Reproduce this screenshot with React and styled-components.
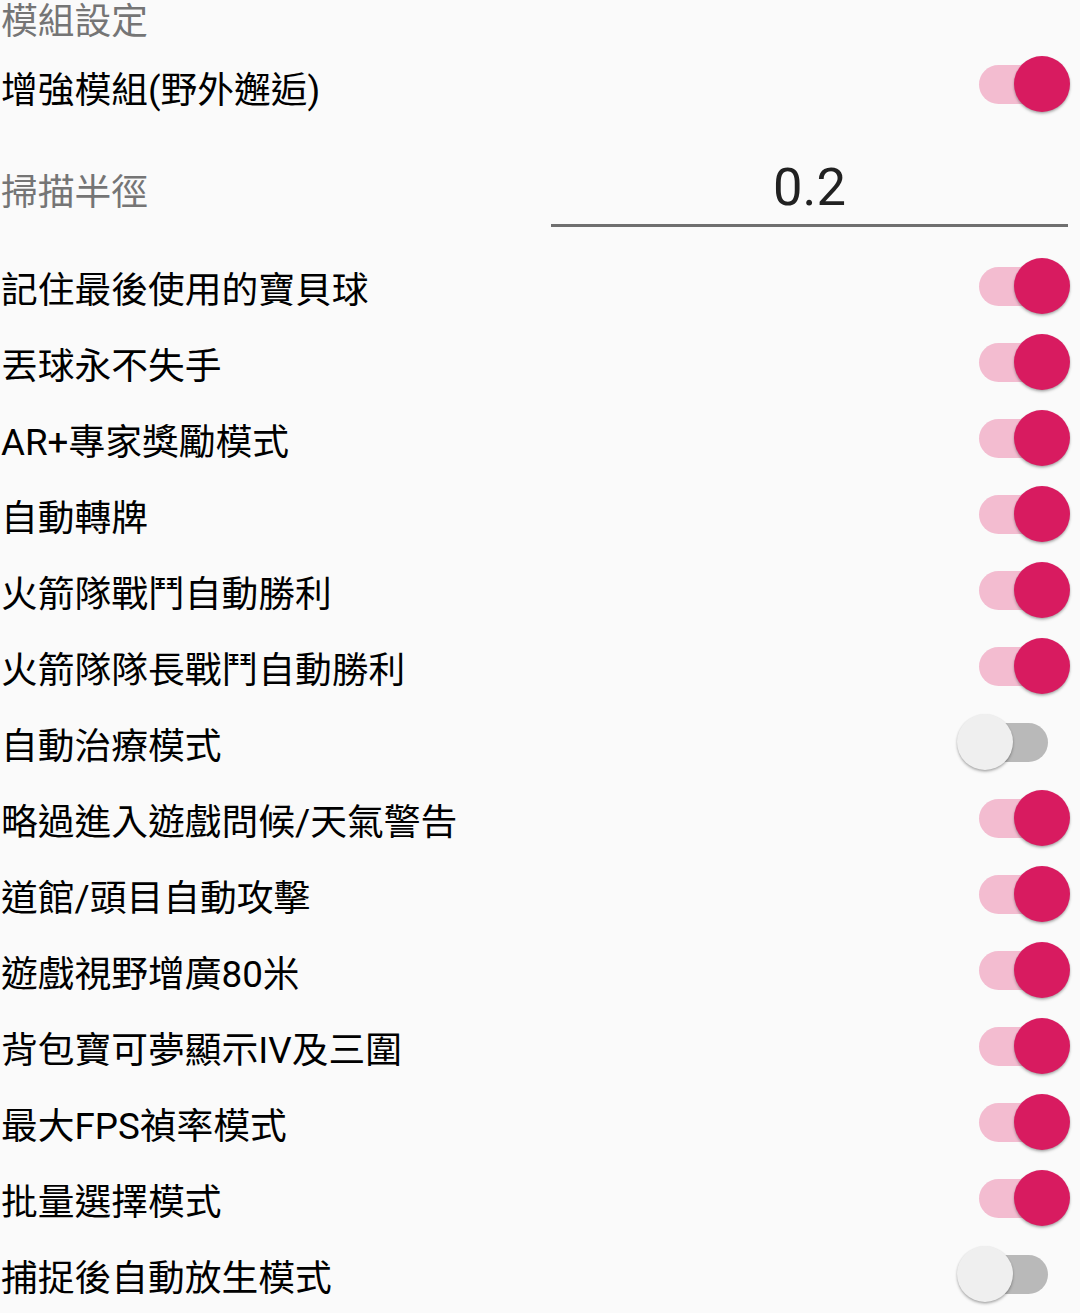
import React, { useState } from "react";
import styled, { createGlobalStyle } from "styled-components";

const Global = createGlobalStyle`
  html, body { margin: 0; padding: 0; background: #fafafa; }
  body { font-family: Roboto, "Noto Sans CJK TC", "Noto Sans CJK SC", sans-serif; }
`;

const Page = styled.div`
  width: 1080px;
  height: 1313px;
  overflow: hidden;
  background: #fafafa;
  display: flex;
  flex-direction: column;
`;

const Heading = styled.div`
  height: 46px;
  line-height: 44px;
  font-size: 36.75px;
  color: #757575;
  padding-left: 1px;
`;

const Row = styled.div`
  height: 76px;
  display: flex;
  align-items: center;
  justify-content: space-between;
  padding-right: 10px;
`;

const Label = styled.div`
  font-size: 36.75px;
  line-height: 44px;
  color: ${(p) => (p.$muted ? "#757575" : "#000")};
  padding-left: 1px;
  padding-top: ${(p) => (p.$nudge ? p.$nudge : 10)}px;
  white-space: nowrap;
`;

const ScanRow = styled.div`
  height: 126px;
  display: flex;
  align-items: flex-start;
  justify-content: space-between;
  padding-right: 12px;
`;

const ScanLabel = styled(Label)`
  margin-top: 49px;
  padding-top: 0;
`;

const Input = styled.div`
  width: 517px;
  margin-top: 33px;
  height: 64px;
  line-height: 64px;
  padding-bottom: 5px;
  border-bottom: 3px solid #6f6f6f;
  font-size: 52.5px;
  color: #212121;
  text-align: center;
  font-family: Roboto, sans-serif;
`;

const Switch = styled.button`
  position: relative;
  width: 113px;
  height: 57px;
  border: 0;
  padding: 0;
  background: transparent;
  cursor: pointer;
  flex: none;
`;

const Track = styled.span`
  position: absolute;
  left: 22px;
  top: 9px;
  width: 69px;
  height: 39px;
  border-radius: 20px;
  background: ${(p) => (p.$on ? "#f3bcd0" : "#b9b9b9")};
`;

const Thumb = styled.span`
  position: absolute;
  top: 0;
  left: ${(p) => (p.$on ? "57px" : "0px")};
  width: 56px;
  height: 56px;
  border-radius: 50%;
  background: ${(p) => (p.$on ? "#d81b60" : "#efefef")};
  box-shadow: 0 2px 3px rgba(0, 0, 0, 0.22), 0 1px 2px rgba(0, 0, 0, 0.14);
`;

const Toggle = ({ on, onClick }) => (
  <Switch onClick={onClick} aria-pressed={on}>
    <Track $on={on} />
    <Thumb $on={on} />
  </Switch>
);

const items = [
  ["記住最後使用的寶貝球", true],
  ["丟球永不失手", true],
  ["AR+專家獎勵模式", true],
  ["自動轉牌", true],
  ["火箭隊戰鬥自動勝利", true],
  ["火箭隊隊長戰鬥自動勝利", true],
  ["自動治療模式", false],
  ["略過進入遊戲問候/天氣警告", true],
  ["道館/頭目自動攻擊", true],
  ["遊戲視野增廣80米", true],
  ["背包寶可夢顯示IV及三圍", true],
  ["最大FPS禎率模式", true],
  ["批量選擇模式", true],
  ["捕捉後自動放生模式", false],
];

export default function App() {
  const [main, setMain] = useState(true);
  const [states, setStates] = useState(items.map((i) => i[1]));
  const flip = (idx) => setStates((s) => s.map((v, i) => (i === idx ? !v : v)));
  return (
    <>
      <Global />
      <Page>
        <Heading>模組設定</Heading>
        <Row>
          <Label $nudge={14}>增強模組(野外邂逅)</Label>
          <Toggle on={main} onClick={() => setMain(!main)} />
        </Row>
        <ScanRow>
          <ScanLabel $muted>掃描半徑</ScanLabel>
          <Input>0.2</Input>
        </ScanRow>
        {items.map(([label], idx) => (
          <Row key={label}>
            <Label>{label}</Label>
            <Toggle on={states[idx]} onClick={() => flip(idx)} />
          </Row>
        ))}
      </Page>
    </>
  );
}
